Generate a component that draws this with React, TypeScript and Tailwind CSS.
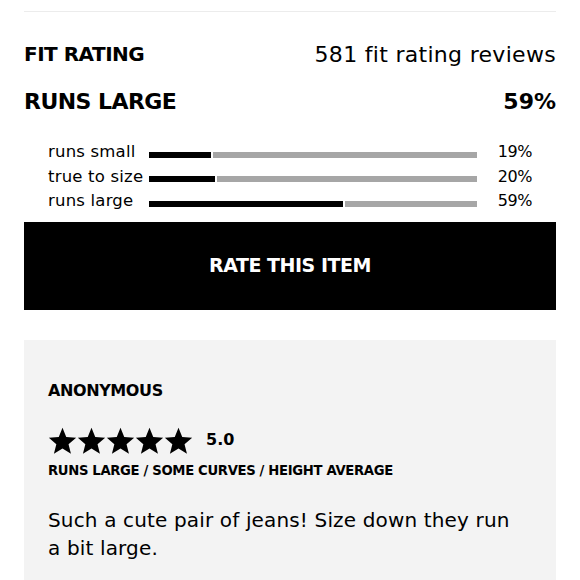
const ROWS = [
  { label: 'runs small', pct: 19 },
  { label: 'true to size', pct: 20 },
  { label: 'runs large', pct: 59 },
]

function Star() {
  return (
    <svg viewBox="0 0 24 24" className="w-[29px] h-[29px] fill-black">
      <path d="M12 1.5l3.1 7.6 8.2.6-6.3 5.3 2 8L12 18.7 4.9 23l2-8L.7 9.7l8.2-.6z" />
    </svg>
  )
}

export default function App() {
  return (
    <div className="w-[580px] h-[580px] overflow-hidden bg-white text-black px-6 font-['DejaVu_Sans','Liberation_Sans',sans-serif]">
      <div className="h-[12px] border-b border-[#ececec]" />

      {/* 总览 */}
      <div className="flex items-center justify-between mt-[28px] h-[28px]">
        <h2 className="text-[20px] font-bold tracking-tight">FIT RATING</h2>
        <span className="text-[22px] tracking-[0.3px]">581 fit rating reviews</span>
      </div>
      <div className="flex items-center justify-between mt-[18px] h-[30px]">
        <h3 className="text-[22px] font-bold tracking-tight">RUNS LARGE</h3>
        <span className="text-[22px] font-bold">59%</span>
      </div>

      {/* 分布条 */}
      <div className="mt-[24px] pl-6 pr-6 flex flex-col">
        {ROWS.map(r => (
          <div key={r.label} className="flex items-center h-[24.5px]">
            <span className="w-[101px] flex-none text-[16.5px] tracking-[0.2px] leading-none">{r.label}</span>
            <div className="flex w-[328px] h-[6px] mt-[5px] flex-none">
              <div className="h-full bg-black" style={{ width: `${r.pct}%` }} />
              <div className="h-full bg-[#a6a6a6] flex-1 ml-[2px]" />
            </div>
            <span className="flex-1 text-right text-[16px] tracking-tight leading-none">{r.pct}%</span>
          </div>
        ))}
      </div>

      <button className="mt-[8px] w-full h-[88px] bg-black text-white text-[19px] font-bold tracking-tight">
        RATE THIS ITEM
      </button>

      {/* 评论卡片 */}
      <div className="mt-[30px] bg-[#f3f3f3] pl-6 pr-10 pt-[43px] pb-10">
        <p className="text-[16px] font-bold leading-none tracking-tight">ANONYMOUS</p>
        <div className="flex items-center mt-[27px] gap-[13px]">
          <div className="flex">
            {[0, 1, 2, 3, 4].map(i => <Star key={i} />)}
          </div>
          <span className="text-[16px] font-bold">5.0</span>
        </div>
        <p className="mt-[6px] text-[13.2px] font-bold tracking-tight">RUNS LARGE / SOME CURVES / HEIGHT AVERAGE</p>
        <p className="mt-[26px] text-[20px] leading-[28px] tracking-[0.15px]">
          Such a cute pair of jeans! Size down they run a bit large.
        </p>
      </div>
    </div>
  )
}
